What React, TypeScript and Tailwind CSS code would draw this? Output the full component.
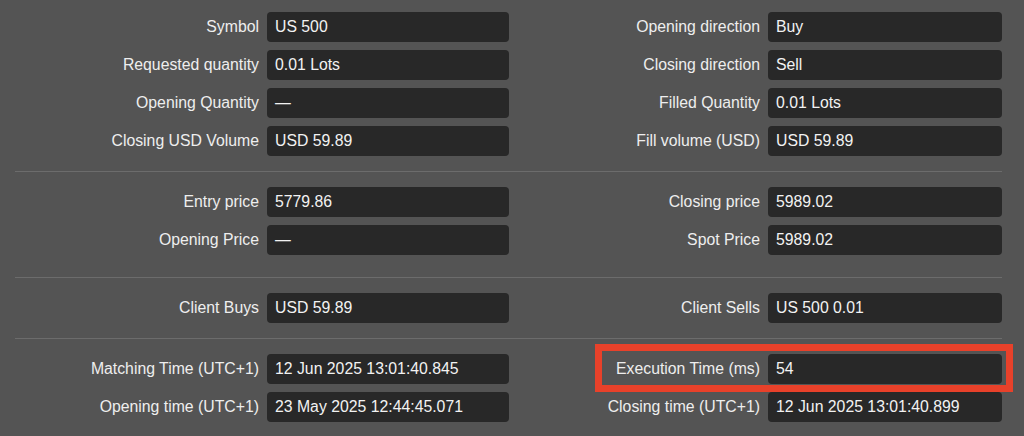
import React from "react"

type Pair = [string, string]
type Row = { left: Pair; right: Pair; highlight?: boolean }

const sections: { rows: Row[] }[] = [
  {
    rows: [
      { left: ["Symbol", "US 500"], right: ["Opening direction", "Buy"] },
      { left: ["Requested quantity", "0.01 Lots"], right: ["Closing direction", "Sell"] },
      { left: ["Opening Quantity", "—"], right: ["Filled Quantity", "0.01 Lots"] },
      { left: ["Closing USD Volume", "USD 59.89"], right: ["Fill volume (USD)", "USD 59.89"] },
    ],
  },
  {
    rows: [
      { left: ["Entry price", "5779.86"], right: ["Closing price", "5989.02"] },
      { left: ["Opening Price", "—"], right: ["Spot Price", "5989.02"] },
    ],
  },
  {
    rows: [{ left: ["Client Buys", "USD 59.89"], right: ["Client Sells", "US 500 0.01"] }],
  },
  {
    rows: [
      {
        left: ["Matching Time (UTC+1)", "12 Jun 2025 13:01:40.845"],
        right: ["Execution Time (ms)", "54"],
        highlight: true,
      },
      { left: ["Opening time (UTC+1)", "23 May 2025 12:44:45.071"], right: ["Closing time (UTC+1)", "12 Jun 2025 13:01:40.899"] },
    ],
  },
]

function Field({ value, width }: { value: string; width: string }) {
  return (
    <div className={`${width} flex h-[30px] items-center rounded-[4px] bg-[#282828] pl-[8px] text-[#f2f2f2]`}>
      {value}
    </div>
  )
}

export default function App() {
  return (
    <div
      className="h-[436px] w-[1024px] overflow-hidden bg-[#545454] pl-[15px] pr-[22px] pt-[12px] text-[15.8px] text-[#eeeeee]"
      style={{ fontFamily: '"Liberation Sans", Arial, sans-serif' }}
    >
      {sections.map((section, si) => (
        <div key={si}>
          {si > 0 && (
            <div
              className={`h-px bg-[#6c6c6c] ${si === 2 ? "mt-[22px]" : "mt-[15px]"} ${si === 3 ? "mb-[15px]" : "mb-[15px]"}`}
            />
          )}
          <div className="flex flex-col gap-[8px]">
            {section.rows.map((row, ri) => (
              <div key={ri} className="flex">
                <div className="flex w-[494px] items-center">
                  <div className="flex-1 pr-[8px] text-right">{row.left[0]}</div>
                  <Field value={row.left[1]} width="w-[242px]" />
                </div>
                <div className="relative flex flex-1 items-center">
                  {row.highlight && (
                    <div className="pointer-events-none absolute -top-[10px] -bottom-[8px] left-[86px] -right-[11px] border-[7px] border-[#e8412a]" />
                  )}
                  <div className="flex-1 pr-[8px] text-right">{row.right[0]}</div>
                  <Field value={row.right[1]} width="w-[234px]" />
                </div>
              </div>
            ))}
          </div>
        </div>
      ))}
    </div>
  )
}
